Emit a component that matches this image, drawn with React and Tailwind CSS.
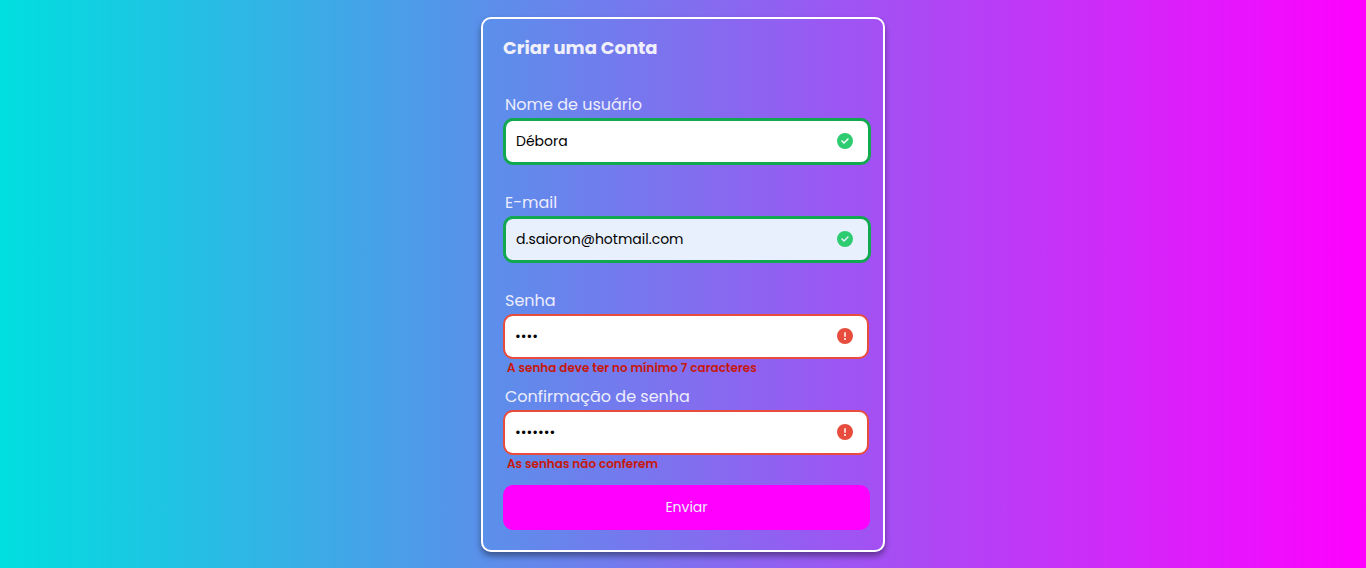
import { FaCircleCheck, FaCircleExclamation } from "react-icons/fa6";

const FIELDS = [
  { id: "username", label: "Nome de usuário", type: "text", value: "Débora" },
  { id: "email", label: "E-mail", type: "email", value: "d.saioron@hotmail.com", filled: true },
  { id: "password", label: "Senha", type: "password", value: "1234", error: "A senha deve ter no mínimo 7 caracteres" },
  { id: "password-confirmation", label: "Confirmação de senha", type: "password", value: "1234567", error: "As senhas não conferem" },
];

function Field({ id, label, type, value, filled, error }) {
  const state = error
    ? "h-[45px] border-2 border-[#e74c3c]"
    : "h-[47px] border-3 border-[#12a850]";
  const Icon = error ? FaCircleExclamation : FaCircleCheck;
  return (
    <div>
      <label htmlFor={id} className="mb-px block pl-0.5 text-base leading-6 text-[#ededfc]">
        {label}
      </label>
      <div className={error ? "relative mr-0.5" : "relative"}>
        <input
          id={id}
          type={type}
          defaultValue={value}
          aria-invalid={Boolean(error)}
          aria-describedby={error ? `${id}-error` : undefined}
          className={`block w-full rounded-[10px] pr-10 pl-[10px] text-sm text-black outline-none ${state} ${filled ? "bg-[#e8f0fe]" : "bg-white"}`}
        />
        <Icon
          aria-hidden="true"
          className={`absolute top-1/2 size-4 -translate-y-1/2 ${error ? "right-4 text-[#e74c3c]" : "right-[18px] text-[#2ecc71]"}`}
        />
      </div>
      <div className="h-[26px] pl-1 text-xs leading-[18px] font-semibold text-[#c8180a]">
        {error && <small id={`${id}-error`} className="text-xs">{error}</small>}
      </div>
    </div>
  );
}

export default function App() {
  return (
    <main className="flex min-h-screen items-center justify-center bg-[linear-gradient(to_right,#00dfdf,#ff00ff)] py-4 font-[Poppins,Inter,sans-serif]">
      <section className="w-full max-w-[404px] rounded-[10px] border-2 border-white pt-[15px] pr-3 pb-5 pl-5 shadow-[0_4px_6px_rgba(0,0,0,0.4)]">
        <h1 className="mb-8 text-lg leading-[27px] font-bold text-[#f0f0fa]">Criar uma Conta</h1>
        <form onSubmit={(event) => event.preventDefault()}>
          {FIELDS.map((field) => (
            <Field key={field.id} {...field} />
          ))}
          <div className="mt-1 pr-px">
            <button type="submit" className="h-[45px] w-full rounded-[10px] bg-[#ff00ff] text-sm text-[#ededfc]">
              Enviar
            </button>
          </div>
        </form>
      </section>
    </main>
  );
}
